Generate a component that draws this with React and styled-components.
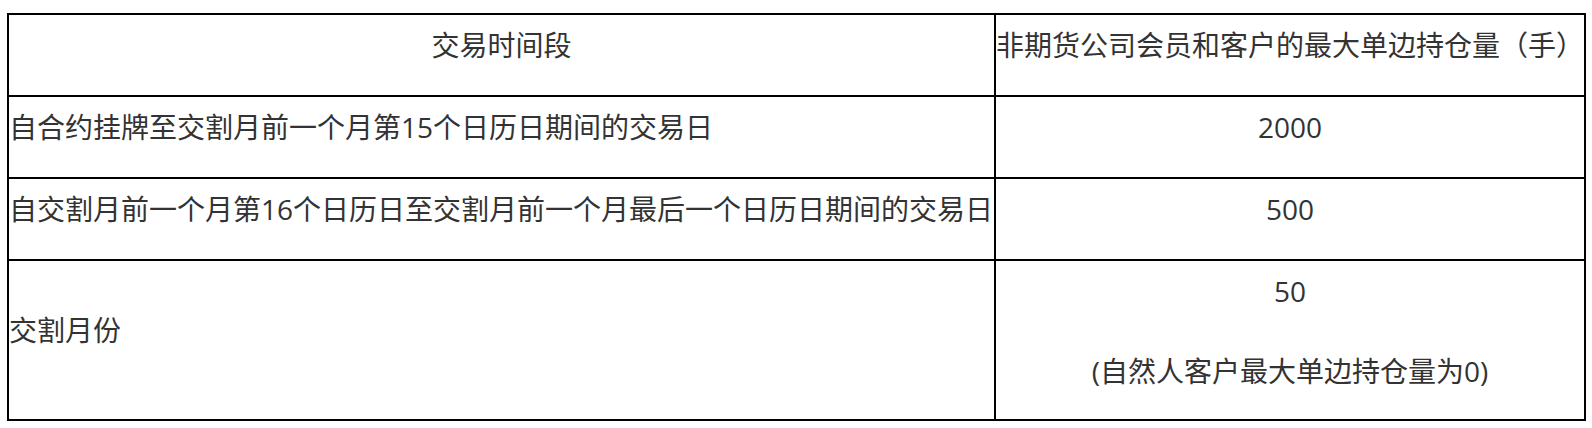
import styled, { createGlobalStyle } from 'styled-components';

const GlobalStyle = createGlobalStyle`
    html,
    body {
        margin: 0;
        background: #fff;
    }
`;

const Page = styled.div`
    padding: 13px 0 0 7px;
`;

const LimitTable = styled.table`
    width: 1579px;
    table-layout: fixed;
    border-collapse: separate;
    border-spacing: 0;
    border-top: 2px solid #000;
    border-left: 2px solid #000;
    font-family: 'Open Sans', 'Noto Sans CJK SC', sans-serif;
    font-size: 28px;
    color: #333;
`;

const Col = styled.col`
    width: ${props => props.$width}px;
`;

const cellStyles = props => `
    border-right: 2px solid #000;
    border-bottom: 2px solid #000;
    padding: 10px 0 ${props.$padBottom || 30}px;
    line-height: 40px;
    text-align: ${props.$align || 'left'};
    vertical-align: middle;
    white-space: nowrap;
    font-weight: normal;
`;

const HeadCell = styled.th`
    ${cellStyles}
`;

const Cell = styled.td`
    ${cellStyles}
`;

const Line = styled.p`
    margin: 0;

    & + & {
        margin-top: 40px;
    }
`;

const ROWS = [
    {
        period: '自合约挂牌至交割月前一个月第15个日历日期间的交易日',
        limit: ['2000'],
    },
    {
        period: '自交割月前一个月第16个日历日至交割月前一个月最后一个日历日期间的交易日',
        limit: ['500'],
    },
    {
        period: '交割月份',
        limit: ['50', '(自然人客户最大单边持仓量为0)'],
    },
];

const App = () => {
    const renderRow = ({ period, limit }) => {
        return (
            <tr key={period}>
                <Cell>{period}</Cell>
                <Cell $align="center" $padBottom={limit.length > 1 ? 28 : 30}>
                    {limit.map(text => (
                        <Line key={text}>{text}</Line>
                    ))}
                </Cell>
            </tr>
        );
    };

    return (
        <>
            <GlobalStyle />
            <Page>
                <LimitTable>
                    <colgroup>
                        <Col $width={987} />
                        <Col $width={590} />
                    </colgroup>
                    <thead>
                        <tr>
                            <HeadCell $align="center">交易时间段</HeadCell>
                            <HeadCell $align="center">
                                非期货公司会员和客户的最大单边持仓量（手）
                            </HeadCell>
                        </tr>
                    </thead>
                    <tbody>{ROWS.map(renderRow)}</tbody>
                </LimitTable>
            </Page>
        </>
    );
};

export default App;
